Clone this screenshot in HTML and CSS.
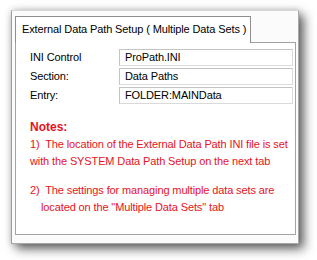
FILE: index.html
```html
<!DOCTYPE html>
<html>
<head>
<meta charset="utf-8">
<link rel="stylesheet" href="styles.css">
</head>
<body>
<div class="shot">
  <div class="window">
    <div class="tab">External Data Path Setup ( Multiple Data Sets )</div>
    <div class="panel">
      <div class="fields">
        <div class="label">INI Control</div>
        <div class="box">ProPath.INI</div>
        <div class="label">Section:</div>
        <div class="box">Data Paths</div>
        <div class="label">Entry:</div>
        <div class="box">FOLDER:MAINData</div>
      </div>
      <div class="notes">
        <div class="notes-title">Notes:</div>
        <div class="note">1)&nbsp; The location of the External Data Path INI file is set<br>with the SYSTEM Data Path Setup on the next tab</div>
        <div class="note second">2)&nbsp; The settings for managing multiple data sets are<br><span class="indent">located on the "Multiple Data Sets" tab</span></div>
      </div>
    </div>
  </div>
</div>
</body>
</html>
```

FILE: styles.css
```css
html, body {
  margin: 0;
  padding: 0;
  background: #ffffff;
}
body {
  width: 317px;
  height: 260px;
  overflow: hidden;
  font-family: "Liberation Sans", Arial, sans-serif;
  font-size: 11px;
  letter-spacing: -0.12px;
  color: #000;
}
.shot {
  padding: 10px 0 0 11px;
}
.window {
  box-sizing: border-box;
  width: 288px;
  height: 234px;
  background: #fbfbfb;
  border-left: 1px solid #9c9c9c;
  border-top: 1px solid #d6d6d6;
  border-right: 1px solid #a8a8a8;
  border-bottom: 1px solid #a8a8a8;
  padding: 5px 0 0 3px;
  box-shadow: 0 0 7px rgba(0,0,0,0.18), 5px 5px 10px rgba(0,0,0,0.6);
}
.tab {
  position: relative;
  z-index: 1;
  box-sizing: border-box;
  width: 236px;
  height: 27px;
  margin-bottom: -1px;
  background: #ffffff;
  border: 1px solid #8e8e8e;
  border-bottom: none;
  padding: 6px 0 0 6px;
  line-height: 13px;
  white-space: nowrap;
}
.panel {
  box-sizing: border-box;
  width: 281px;
  height: 193px;
  background: #ffffff;
  border: 1px solid #a3a3a3;
  padding: 6px 2px 0 14px;
}
.fields {
  display: grid;
  grid-template-columns: 89px 174px;
  row-gap: 2px;
}
.label {
  height: 17px;
  line-height: 17px;
}
.box {
  box-sizing: border-box;
  height: 17px;
  line-height: 15px;
  padding-left: 5px;
  border: 1px solid #c4c4c4;
  border-right-color: #dadada;
  border-bottom-color: #dadada;
  background: #ffffff;
  white-space: nowrap;
}
.notes {
  margin-top: 15px;
  color: #e6121c;
  line-height: 17px;
}
.notes-title {
  font-weight: bold;
  font-size: 12px;
  letter-spacing: 0;
}
.note {
  white-space: nowrap;
}
.note.second {
  margin-top: 12px;
}
.indent {
  padding-left: 11px;
}
```
